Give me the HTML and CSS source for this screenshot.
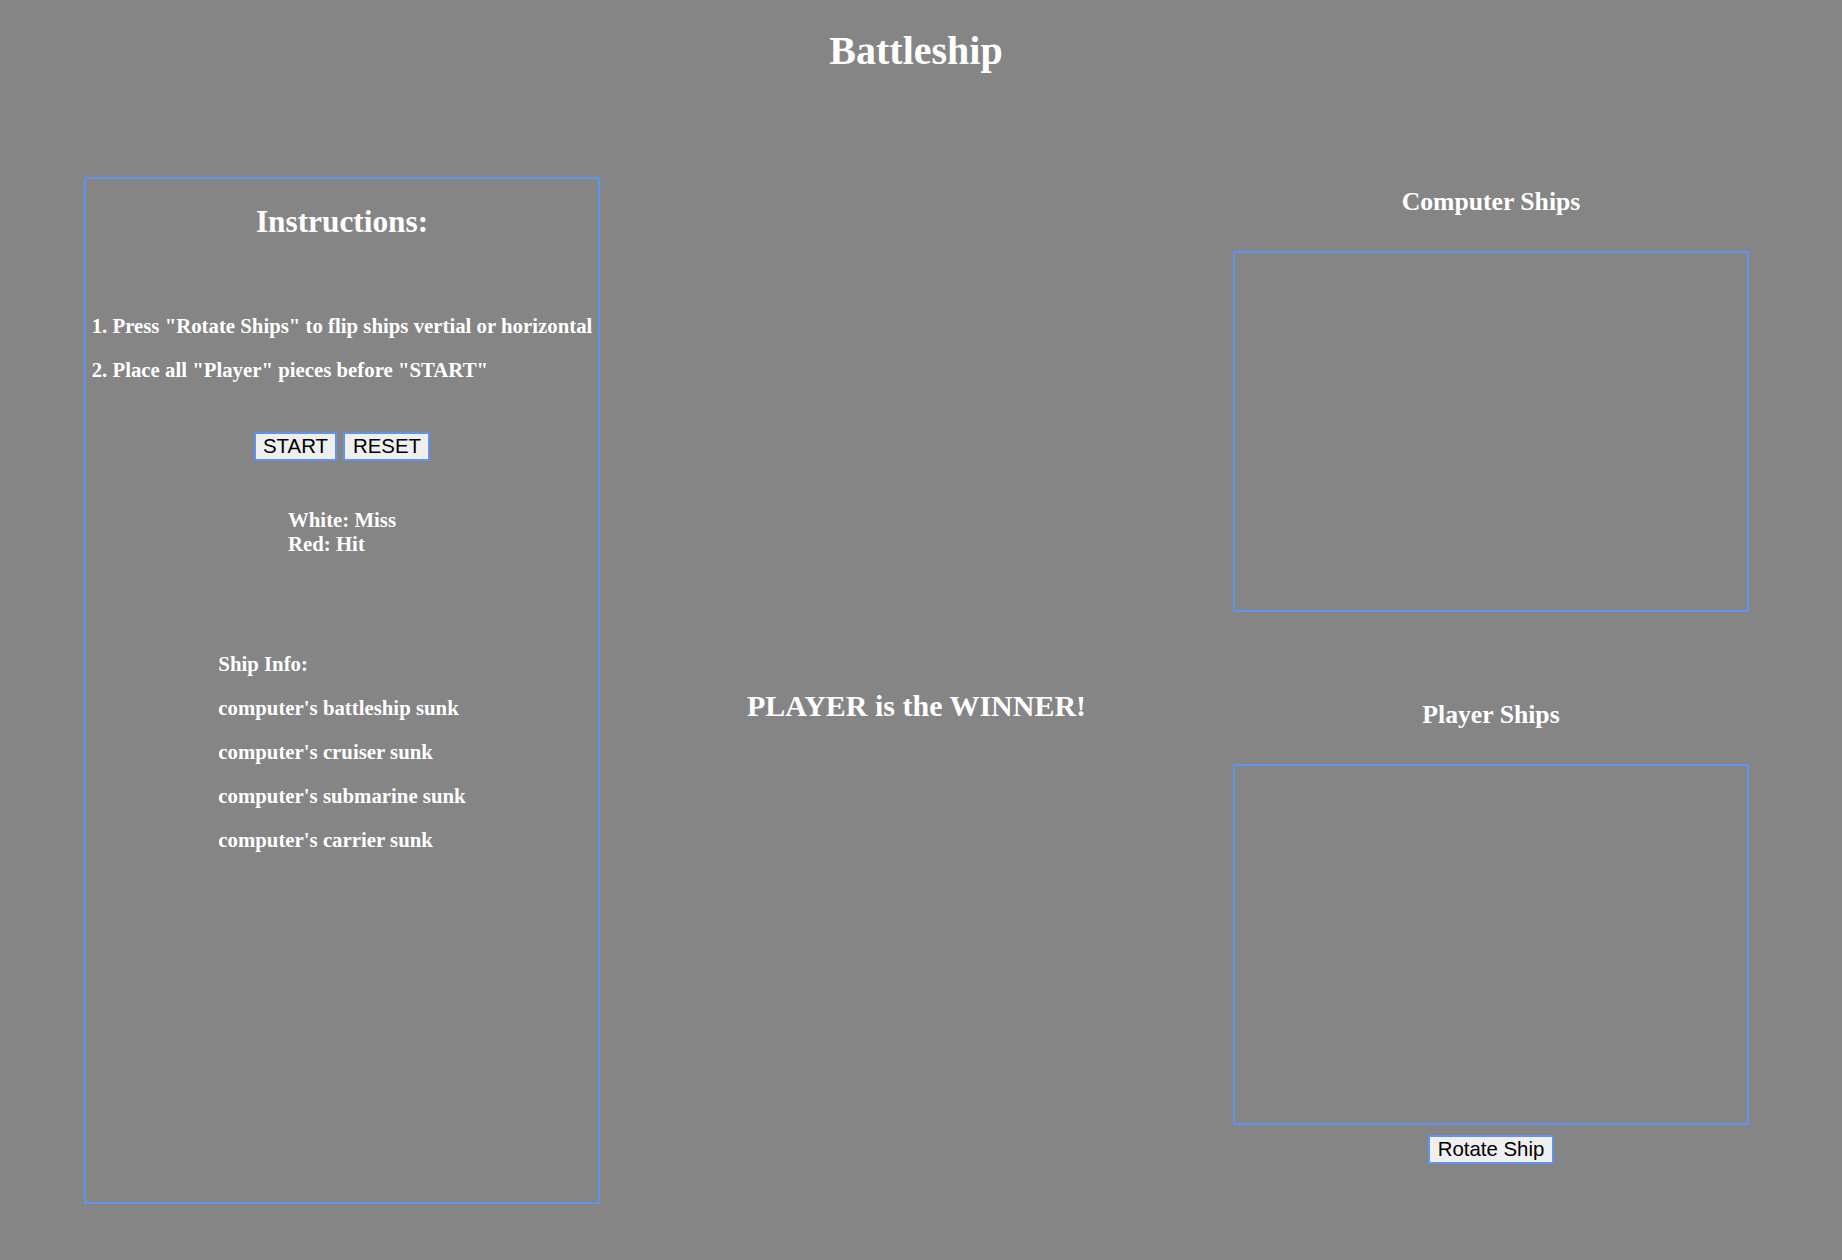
FILE: index.html
```html
<!DOCTYPE html>
<html lang="en">
<head>
<meta charset="utf-8">
<title>Battleship</title>
<link rel="stylesheet" href="styles.css">
</head>
<body>
<h1 class="title">Battleship</h1>
<div class="main">
  <section class="panel">
    <h2 class="panel-heading">Instructions:</h2>
    <div class="fit steps">
      <p class="line">1. Press "Rotate Ships" to flip ships vertial or horizontal</p>
      <p class="line">2. Place all "Player" pieces before "START"</p>
    </div>
    <div class="controls">
      <button class="btn">START</button>
      <button class="btn">RESET</button>
    </div>
    <div class="fit legend">White: Miss<br>Red: Hit</div>
    <div class="fit ship-info">
      <p class="line">Ship Info:</p>
      <p class="line">computer's battleship sunk</p>
      <p class="line">computer's cruiser sunk</p>
      <p class="line">computer's submarine sunk</p>
      <p class="line">computer's carrier sunk</p>
    </div>
  </section>
  <section class="center">
    <h2 class="winner">PLAYER is the WINNER!</h2>
  </section>
  <section class="boards">
    <h3 class="board-heading first">Computer Ships</h3>
    <div class="board"></div>
    <h3 class="board-heading second">Player Ships</h3>
    <div class="board"></div>
    <button class="btn rotate">Rotate Ship</button>
  </section>
</div>
</body>
</html>
```
FILE: styles.css
```css
html, body {
  margin: 0;
  padding: 0;
}
body {
  background: #858585;
  color: #ffffff;
  font-family: "Liberation Serif", "Times New Roman", serif;
  font-weight: bold;
  width: 1842px;
  height: 1260px;
  overflow: hidden;
}
.title {
  margin: 28px 10px 0 0;
  font-size: 40px;
  line-height: 46px;
  text-align: center;
}
.main {
  display: flex;
  align-items: flex-start;
  padding: 0 93px 0 84px;
  margin-top: 103px;
}
.panel {
  box-sizing: border-box;
  width: 516px;
  height: 1027px;
  border: 2px solid #5f93f0;
  flex: none;
}
.panel-heading {
  margin: 25px 0 0;
  font-size: 31.3px;
  line-height: 35px;
  text-align: center;
}
.fit {
  width: fit-content;
  margin-left: auto;
  margin-right: auto;
  text-align: left;
  font-size: 20.8px;
  line-height: 24px;
}
.line {
  margin: 0 0 20px;
}
.line:last-child {
  margin-bottom: 0;
}
.steps {
  margin-top: 75px;
}
.controls {
  display: flex;
  justify-content: center;
  gap: 6px;
  margin-top: 50px;
}
.btn {
  font-family: "Liberation Sans", Arial, sans-serif;
  font-weight: normal;
  font-size: 20.4px;
  line-height: 23px;
  color: #000000;
  background: #efefef;
  border: 2px solid #5f93f0;
  padding: 1px 7.5px;
  margin: 0;
  border-radius: 0;
}
.legend {
  margin-top: 47px;
}
.ship-info {
  margin-top: 96px;
}
.center {
  flex: 1;
  padding-top: 511px;
  text-align: center;
}
.winner {
  margin: 0;
  font-size: 30px;
  line-height: 35px;
}
.boards {
  width: 516px;
  flex: none;
  display: flex;
  flex-direction: column;
  align-items: center;
}
.board-heading {
  margin: 0;
  font-size: 25.7px;
  line-height: 29px;
  text-align: center;
}
.board-heading.first {
  margin-top: 10px;
}
.board-heading.second {
  margin-top: 88px;
}
.board {
  box-sizing: border-box;
  width: 516px;
  height: 361px;
  border: 2px solid #5f93f0;
  margin-top: 35px;
}
.rotate {
  margin-top: 10px;
}
```
